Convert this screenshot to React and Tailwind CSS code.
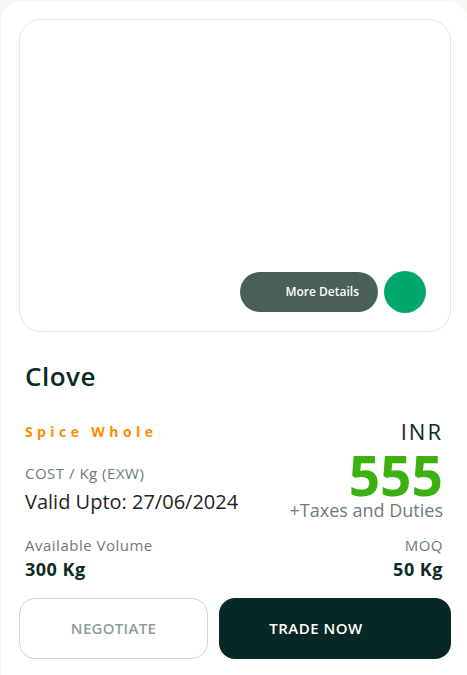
import React from 'react'

export default function App() {
    const font = { fontFamily: '"Open Sans", "Noto Sans", sans-serif' };

    return (
        <div className="min-h-screen bg-[#f7f6f2] pl-px pt-px" style={font}>
            <div className="bg-white rounded-t-[20px] min-h-[674px] pl-[18px] pr-[16px] pt-[18px]">
                {/* Image area */}
                <div className="h-[313px] rounded-[22px] border border-[#e6e6e6] flex items-end justify-end gap-[6px] pr-[24px] pb-[19px]">
                    <button className="w-[138px] h-[40px] rounded-full bg-[#4a5f57] text-white text-[12px] font-semibold flex items-center justify-end pr-[19px]">
                        More Details
                    </button>
                    <div className="w-[42px] h-[42px] rounded-full bg-[#00a86b] mb-[-1px]" />
                </div>

                {/* Info */}
                <div className="pl-[6px] pr-[8px]">
                    <h1 className="mt-[28px] text-[26px] leading-[32px] font-semibold tracking-[0.5px] text-[#0b2b25]">Clove</h1>

                    <div className="mt-[25px] flex items-center justify-between h-[28px]">
                        <span className="text-[14px] font-bold tracking-[4.4px] text-[#ff8c00]">Spice Whole</span>
                        <span className="text-[22px] leading-[28px] font-medium tracking-[2px] text-[#0b2b25]">INR</span>
                    </div>

                    <div className="mt-[9px] flex justify-between">
                        <div className="pt-[9px]">
                            <div className="text-[15px] leading-[20px] tracking-[0.5px] text-[#6b7d76]">COST / Kg (EXW)</div>
                            <div className="mt-[7px] text-[20px] leading-[24px] text-[#1f2422]">Valid Upto: 27/06/2024</div>
                        </div>
                        <div className="flex flex-col items-end">
                            <div className="text-[55px] leading-[42px] font-bold text-[#3cb211]">555</div>
                            <div className="mt-[3px] text-[18px] leading-[22px] text-[#6b7d76]">+Taxes and Duties</div>
                        </div>
                    </div>

                    <div className="mt-[14px] flex justify-between">
                        <div>
                            <div className="text-[15px] leading-[20px] tracking-[0.5px] text-[#6b7d76]">Available Volume</div>
                            <div className="mt-[3px] text-[18px] leading-[22px] font-bold tracking-[0.5px] text-[#0b2b25]">300 Kg</div>
                        </div>
                        <div className="flex flex-col items-end">
                            <div className="text-[15px] leading-[20px] tracking-[0.5px] text-[#6b7d76]">MOQ</div>
                            <div className="mt-[3px] text-[18px] leading-[22px] font-bold tracking-[0.5px] text-[#0b2b25]">50 Kg</div>
                        </div>
                    </div>
                </div>

                {/* Actions */}
                <div className="mt-[18px] flex gap-[11px]">
                    <button className="w-[189px] h-[61px] rounded-[16px] border border-[#c9d6d1] text-[15px] font-semibold tracking-[0.3px] text-[#8aa095] uppercase">
                        Negotiate
                    </button>
                    <button className="flex-1 h-[61px] rounded-[16px] bg-[#072824] pr-[38px] text-[15px] font-semibold tracking-[0.5px] text-white uppercase">
                        Trade Now
                    </button>
                </div>
            </div>
        </div>
    )
}
